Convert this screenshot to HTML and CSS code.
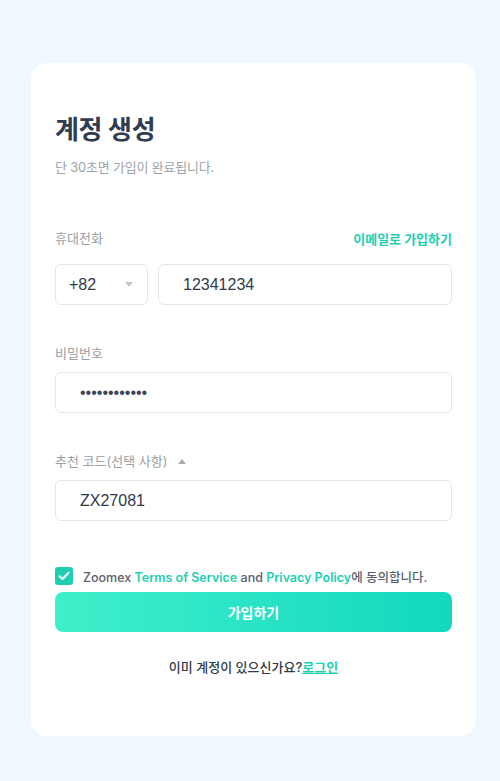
FILE: index.html
```html
<!DOCTYPE html>
<html lang="ko">
<head>
<meta charset="utf-8">
<link rel="stylesheet" href="styles.css">
</head>
<body>
<div class="card">
  <h1 class="title">계정 생성</h1>
  <p class="subtitle">단 30초면 가입이 완료됩니다.</p>

  <div class="label-row first">
    <span class="label">휴대전화</span>
    <a class="link-strong">이메일로 가입하기</a>
  </div>
  <div class="phone-row">
    <div class="field select">
      <span>+82</span>
      <span class="caret-down"></span>
    </div>
    <div class="field grow wide-pad">12341234</div>
  </div>

  <div class="label-row">
    <span class="label">비밀번호</span>
  </div>
  <div class="field wide-pad dots">••••••••••••</div>

  <div class="label-row">
    <span class="label">추천 코드(선택 사항)</span>
    <span class="caret-up"></span>
  </div>
  <div class="field wide-pad">ZX27081</div>

  <div class="agree">
    <span class="checkbox">
      <svg width="12" height="10" viewBox="0 0 12 10"><path d="M1.5 5.2 L4.6 8 L10.5 1.8" fill="none" stroke="#fff" stroke-width="2" stroke-linecap="round" stroke-linejoin="round"/></svg>
    </span>
    <span class="agree-text">Zoomex <a class="link">Terms of Service</a> and <a class="link">Privacy Policy</a>에 동의합니다.</span>
  </div>
  <button class="submit">가입하기</button>

  <p class="login">이미 계정이 있으신가요?<a class="login-link">로그인</a></p>
</div>
</body>
</html>
```

FILE: styles.css
```css
* { box-sizing: border-box; }
html, body { margin: 0; padding: 0; }
body {
  background: #eef8fd;
  font-family: "Inter", "Noto Sans CJK KR", sans-serif;
  width: 500px;
  height: 781px;
  overflow: hidden;
}
.card {
  margin: 63px 0 0 31px;
  width: 445px;
  height: 673px;
  background: #fff;
  border-radius: 16px;
  padding: 49px 24px 0 24px;
}
.title {
  margin: 0;
  font-size: 26px;
  line-height: 36px;
  font-weight: 700;
  color: #313d4e;
  letter-spacing: -0.3px;
}
.subtitle {
  margin: 10px 0 0;
  font-size: 13px;
  line-height: 18px;
  color: #a0a4aa;
  letter-spacing: -0.2px;
}
.label-row {
  display: flex;
  align-items: center;
  justify-content: space-between;
  height: 18px;
  margin-top: 39px;
  margin-bottom: 10px;
}
.label-row.first {
  margin-top: 53px;
  margin-bottom: 17px;
}
.label {
  font-size: 13px;
  line-height: 18px;
  color: #9a9ea5;
}
.link-strong {
  font-size: 13px;
  font-weight: 700;
  color: #1dcfb0;
}
.caret-up {
  width: 0; height: 0;
  border-left: 4px solid transparent;
  border-right: 4px solid transparent;
  border-bottom: 5px solid #a8adb3;
  margin-left: 11px;
  margin-right: auto;
}
.phone-row {
  display: flex;
  gap: 10px;
}
.field {
  height: 41px;
  border: 1px solid #e3e6ea;
  border-radius: 6px;
  display: flex;
  align-items: center;
  font-family: "Liberation Sans", "Noto Sans CJK KR", sans-serif;
  font-size: 16px;
  color: #2f3a4a;
  padding: 0 13px;
}
.select {
  width: 93px;
  justify-content: space-between;
  padding-right: 14px;
}
.caret-down {
  width: 0; height: 0;
  border-left: 4px solid transparent;
  border-right: 4px solid transparent;
  border-top: 5px solid #c3c7cc;
}
.grow { flex: 1; }
.wide-pad { padding-left: 24px; }
.dots {
  font-family: "Liberation Sans", sans-serif;
  font-size: 16px;
  letter-spacing: 0;
  color: #3a4658;
}
.agree {
  display: flex;
  align-items: center;
  margin-top: 45px;
  height: 20px;
}
.checkbox {
  width: 18px;
  height: 18px;
  border-radius: 3px;
  background: #1dcfb0;
  display: flex;
  align-items: center;
  justify-content: center;
  margin-right: 10px;
}
.agree-text {
  font-size: 12.5px;
  font-weight: 500;
  color: #5a6170;
}
.link {
  color: #1dcfb0;
  font-weight: 600;
}
.submit {
  display: block;
  width: 100%;
  height: 40px;
  margin-top: 6px;
  border: 0;
  border-radius: 8px;
  background: linear-gradient(90deg, #40efcb 0%, #12d8bf 100%);
  color: #fff;
  font-family: inherit;
  font-size: 14px;
  font-weight: 700;
}
.login {
  margin: 26px 0 0;
  text-align: center;
  font-size: 13px;
  line-height: 18px;
  font-weight: 500;
  color: #2f3a4a;
}
.login-link {
  color: #1dcfb0;
  font-weight: 700;
  text-decoration: underline;
}
```
